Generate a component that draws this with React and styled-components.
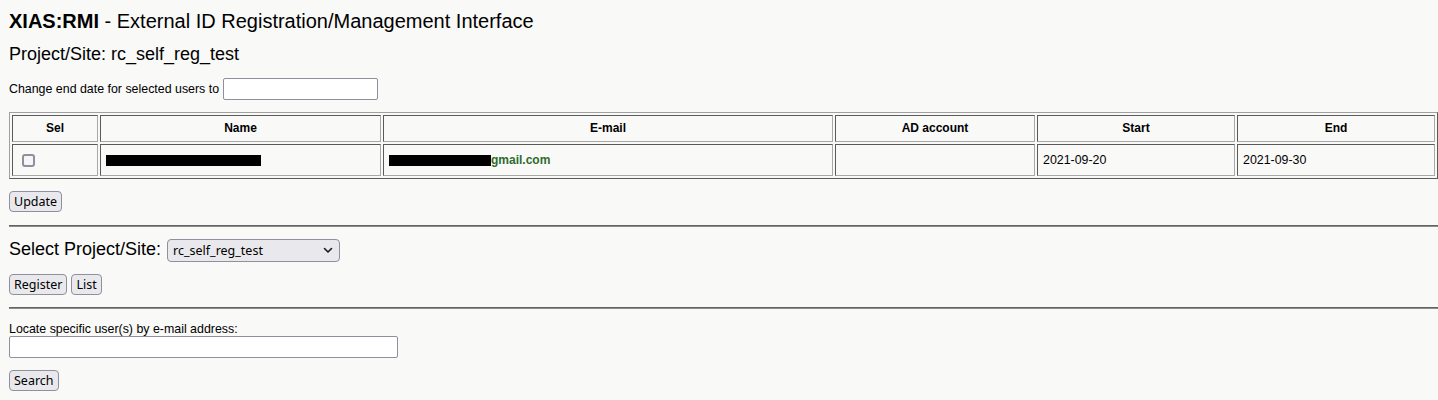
import React from "react";
import styled, { createGlobalStyle } from "styled-components";

const GlobalStyle = createGlobalStyle`
  html, body {
    margin: 0;
    padding: 0;
    background: #f9f9f8;
  }
  body {
    font-family: "Liberation Sans", Arial, sans-serif;
    color: #000;
  }
  *, *::before, *::after { box-sizing: border-box; }
`;

const Page = styled.div`
  display: flex;
  flex-direction: column;
  align-items: flex-start;
  padding: 10px 0 12px 9px;
  width: 1438px;
`;

const Title = styled.div`
  font-size: 20px;
  line-height: 23px;
  margin: 0;
`;

const Brand = styled.strong`
  font-weight: bold;
`;

const Subtitle = styled.div`
  font-size: 18px;
  line-height: 21px;
  margin-top: 11px;
`;

const FieldRow = styled.div`
  display: flex;
  align-items: center;
  gap: 4px;
  margin-top: ${(p) => p.$top}px;
  font-size: 12.4px;
  line-height: 14px;
`;

const SmallLabel = styled.div`
  font-size: 12.4px;
  line-height: 14px;
  margin-top: ${(p) => p.$top}px;
`;

const TextInput = styled.input`
  width: ${(p) => p.$width}px;
  height: 22px;
  border: 1px solid #8f8f9d;
  border-radius: 2px;
  background: #fff;
  padding: 0 4px;
  font: 13px "Noto Sans", sans-serif;
  margin: 0;
  outline: none;
`;

const UserTable = styled.table`
  margin-top: 12px;
  width: 1429px;
  table-layout: fixed;
  border-collapse: separate;
  border-spacing: 2px;
  border-style: solid;
  border-width: 1px;
  border-color: #a0a0a0 #5a5a5a #5a5a5a #a0a0a0;
  font-size: 12px;
`;

const HeadCell = styled.th`
  width: ${(p) => p.$width}px;
  padding: 5px;
  line-height: 15px;
  font-weight: bold;
  text-align: center;
  vertical-align: middle;
  border-style: solid;
  border-width: 1px;
  border-color: #5a5a5a #a8a8a8 #a8a8a8 #5a5a5a;
`;

const Cell = styled.td`
  padding: 5px;
  font-size: 12.4px;
  line-height: 20px;
  text-align: left;
  vertical-align: middle;
  white-space: nowrap;
  border-style: solid;
  border-width: 1px;
  border-color: #5a5a5a #a8a8a8 #a8a8a8 #5a5a5a;
`;

const CheckBox = styled.input.attrs({ type: "checkbox" })`
  appearance: none;
  display: block;
  width: 13px;
  height: 13px;
  margin: 4px 0 3px 4px;
  border: 2px solid #8f8f9d;
  border-radius: 3px;
  background: #f6f6f8;
`;

const Redacted = styled.span`
  display: inline-block;
  width: ${(p) => p.$width}px;
  height: 11px;
  background: #000;
  vertical-align: middle;
`;

const Domain = styled.span`
  color: #2f6b2f;
  font-size: 12px;
  font-weight: bold;
`;

const Button = styled.button`
  height: 21px;
  padding: 0 4px;
  margin: 0;
  margin-top: ${(p) => p.$top || 0}px;
  font: 12.5px "Noto Sans", sans-serif;
  line-height: 19px;
  color: #000;
  background: #e9e9ed;
  border: 1px solid #8f8f9d;
  border-radius: 4px;
`;

const ButtonRow = styled.div`
  display: flex;
  gap: 4px;
  margin-top: 12px;
`;

const Rule = styled.hr`
  align-self: stretch;
  height: 0;
  margin: ${(p) => p.$top}px 0 0 0;
  border: 0;
  border-top: 1px solid #646464;
  border-bottom: 1px solid #8a8a8a;
`;

const SelectRow = styled.div`
  display: flex;
  align-items: baseline;
  gap: 6px;
  margin-top: 12px;
`;

const SelectLabel = styled.span`
  font-size: 18px;
  line-height: 21px;
`;

const SelectWrap = styled.span`
  position: relative;
  display: inline-flex;
`;

const Select = styled.select`
  appearance: none;
  width: 173px;
  height: 23px;
  margin: 0;
  padding: 0 20px 0 5px;
  font: 12.5px "Noto Sans", sans-serif;
  color: #000;
  background: #e9e9ed;
  border: 1px solid #8f8f9d;
  border-radius: 4px;
`;

const Chevron = styled.svg`
  position: absolute;
  right: 7px;
  top: 8px;
  pointer-events: none;
`;

const columns = [
  { label: "Sel", width: 86 },
  { label: "Name", width: 281 },
  { label: "E-mail", width: 450 },
  { label: "AD account", width: 200 },
  { label: "Start", width: 198 },
  { label: "End", width: 198 },
];

export default function App() {
  return (
    <>
      <GlobalStyle />
      <Page>
        <Title>
          <Brand>XIAS:RMI</Brand> - External ID Registration/Management Interface
        </Title>
        <Subtitle>Project/Site: rc_self_reg_test</Subtitle>

        <FieldRow $top={13}>
          <span>Change end date for selected users to</span>
          <TextInput $width={155} type="text" />
        </FieldRow>

        <UserTable>
          <thead>
            <tr>
              {columns.map((c) => (
                <HeadCell key={c.label} $width={c.width}>
                  {c.label}
                </HeadCell>
              ))}
            </tr>
          </thead>
          <tbody>
            <tr>
              <Cell>
                <CheckBox />
              </Cell>
              <Cell>
                <Redacted $width={155} />
              </Cell>
              <Cell>
                <Redacted $width={102} />
                <Domain>gmail.com</Domain>
              </Cell>
              <Cell />
              <Cell>2021-09-20</Cell>
              <Cell>2021-09-30</Cell>
            </tr>
          </tbody>
        </UserTable>

        <Button $top={12}>Update</Button>

        <Rule $top={13} />

        <SelectRow>
          <SelectLabel>Select Project/Site:</SelectLabel>
          <SelectWrap>
            <Select defaultValue="rc_self_reg_test">
              <option value="rc_self_reg_test">rc_self_reg_test</option>
            </Select>
            <Chevron width="10" height="7" viewBox="0 0 10 7">
              <path d="M1.5 1.5 L5 5 L8.5 1.5" fill="none" stroke="#1a1a1a" strokeWidth="1.6" strokeLinecap="round" strokeLinejoin="round" />
            </Chevron>
          </SelectWrap>
        </SelectRow>

        <ButtonRow>
          <Button>Register</Button>
          <Button>List</Button>
        </ButtonRow>

        <Rule $top={12} />

        <SmallLabel $top={13}>Locate specific user(s) by e-mail address:</SmallLabel>
        <TextInput $width={389} type="text" />

        <Button $top={12}>Search</Button>
      </Page>
    </>
  );
}
